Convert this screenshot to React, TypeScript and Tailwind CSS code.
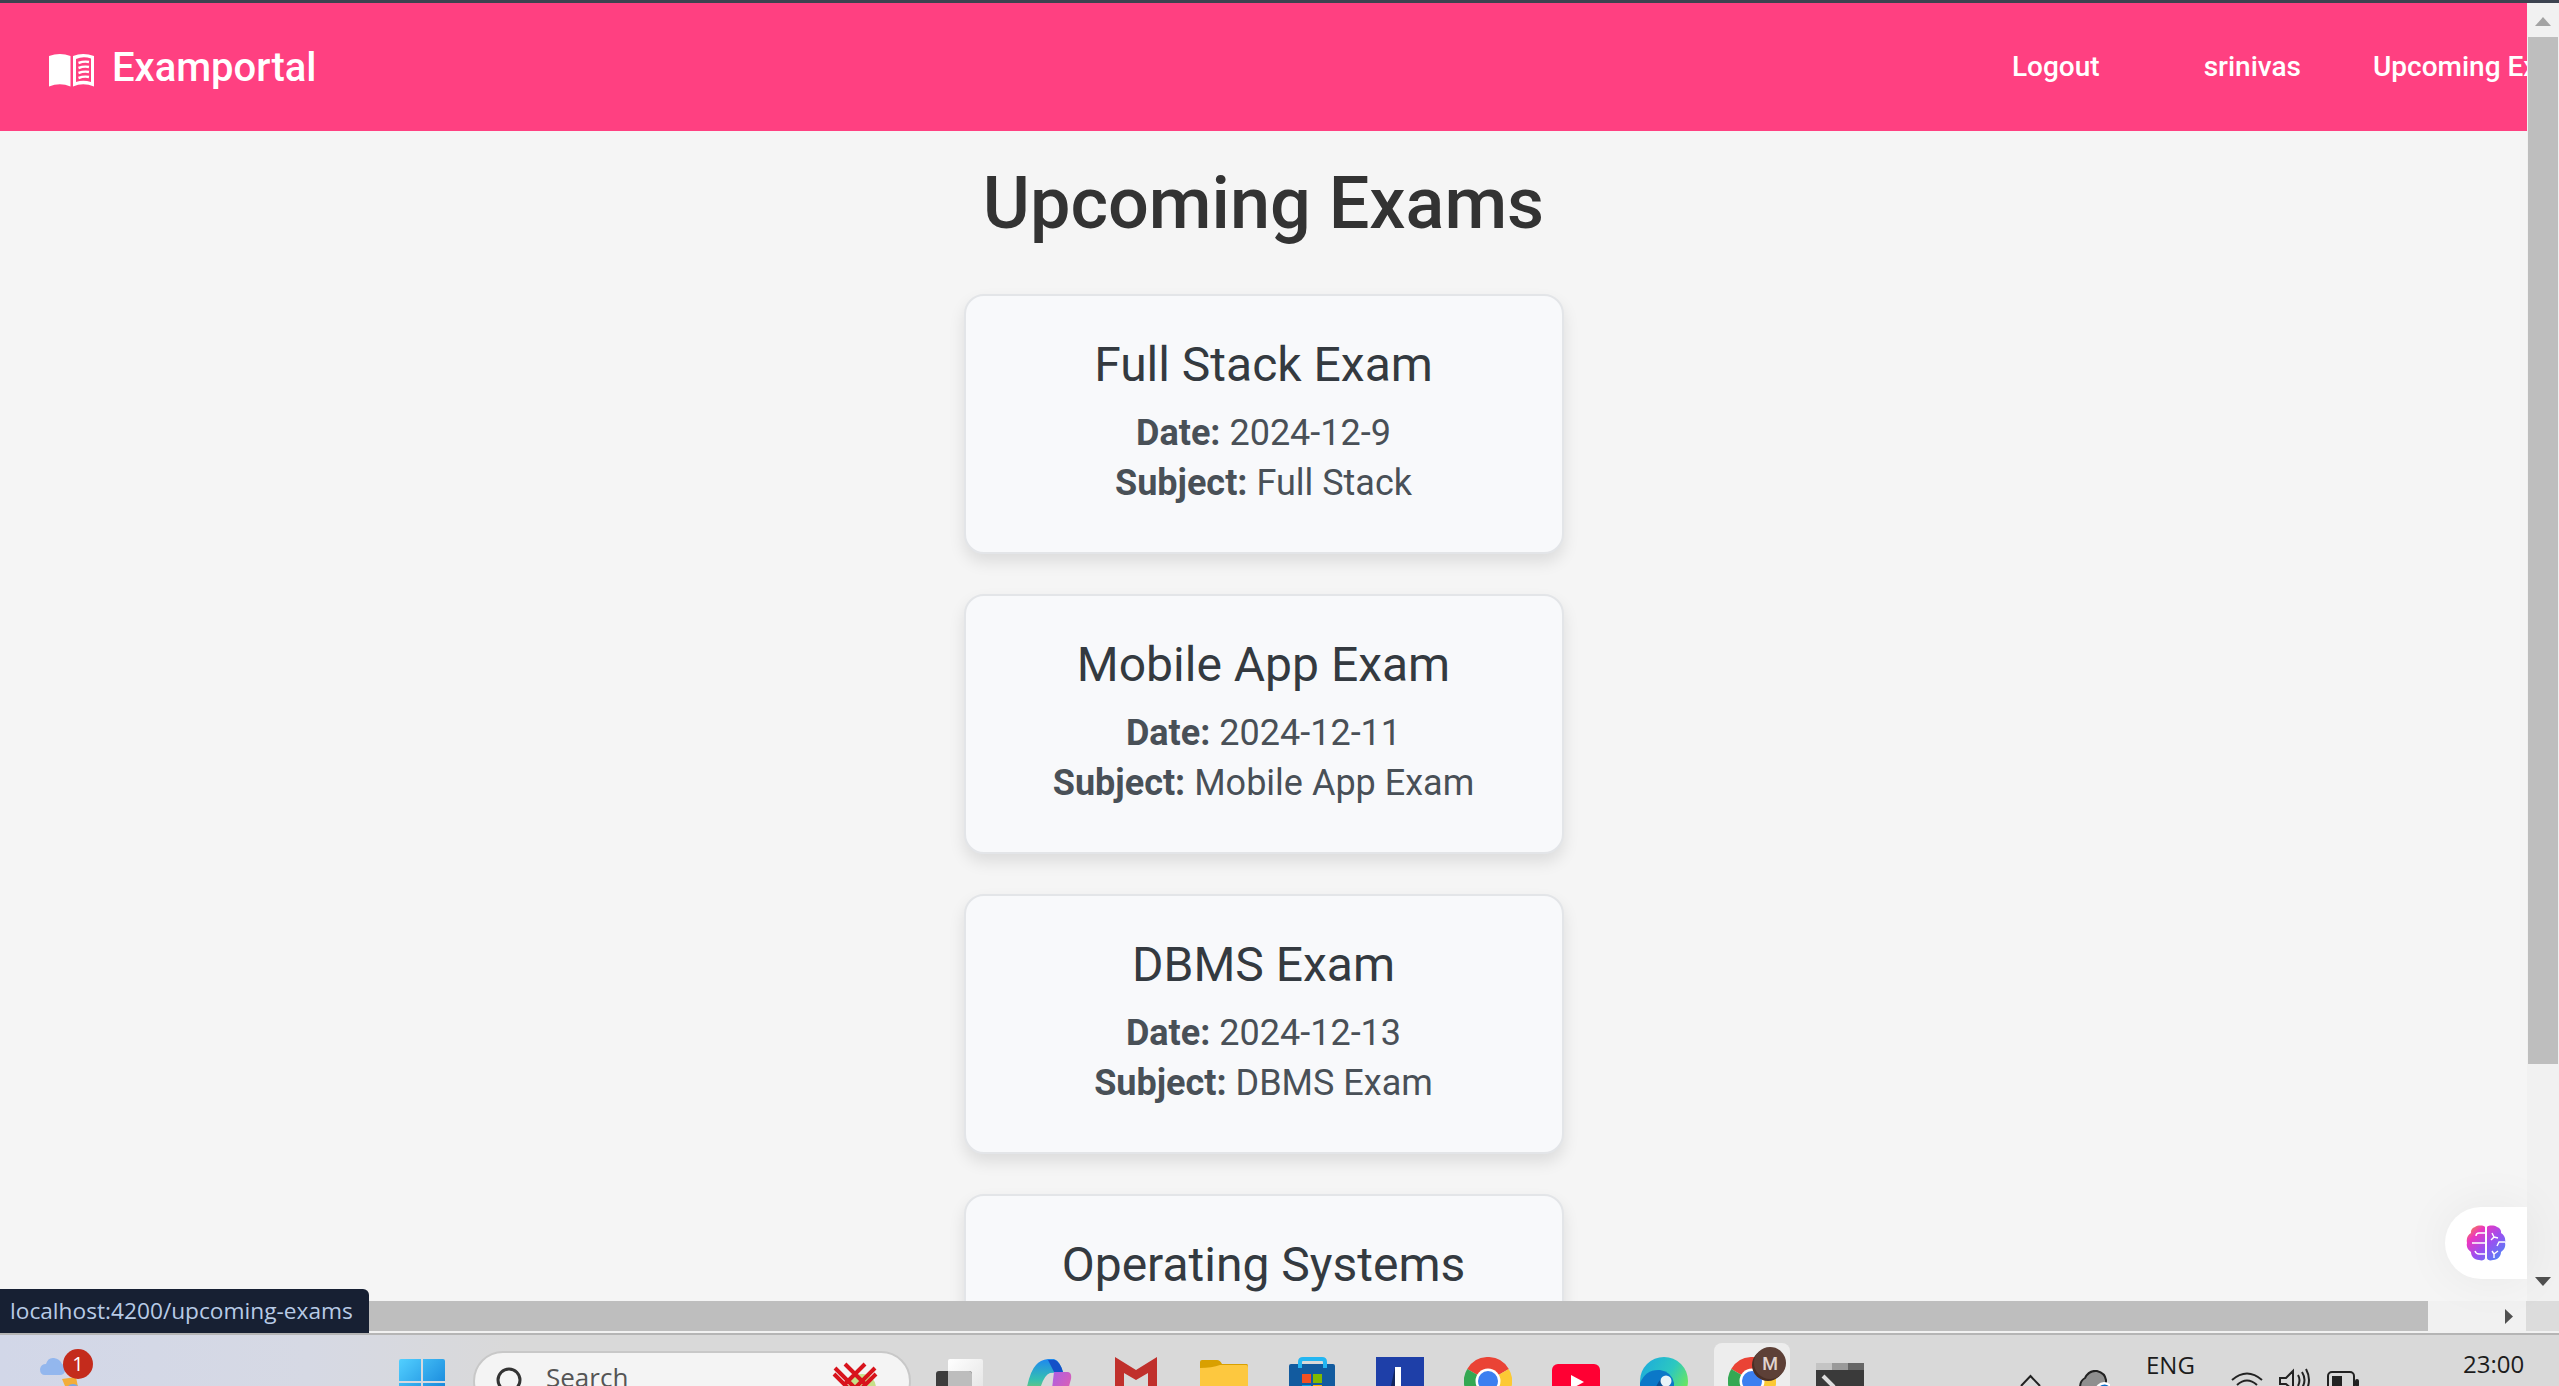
const exams = [
  { title: "Full Stack Exam", date: "2024-12-9", subject: "Full Stack" },
  { title: "Mobile App Exam", date: "2024-12-11", subject: "Mobile App Exam" },
  { title: "DBMS Exam", date: "2024-12-13", subject: "DBMS Exam" },
  { title: "Operating Systems", date: "2024-12-16", subject: "Operating Systems" },
];

function BookIcon() {
  return (
    <svg width="45" height="34" viewBox="0 0 45 34" className="shrink-0 mt-[6px]">
      <path d="M0 3 Q11 -1 21.5 3 V33.5 Q11 29 0 33.5 Z" fill="#fff" />
      <path d="M24 3 Q34 -1 45 3 V33.5 Q34 29 24 33.5 Z" fill="#fff" />
      <path d="M27 6 Q34 3 42 5.5 V29 Q34 26.5 27 29 Z" fill="#ff4081" />
      <path d="M29.5 10 Q35 8 40 9 M29.5 15 Q35 13 40 14 M29.5 20 Q35 18 40 19 M29.5 25 Q35 23 40 24" stroke="#fff" strokeWidth="2.4" fill="none" />
    </svg>
  );
}

function BrainIcon() {
  return (
    <svg width="40" height="36" viewBox="0 0 40 36">
      <defs>
        <linearGradient id="brainFill" x1="0" y1="0" x2="1" y2="1">
          <stop offset="0" stopColor="#f79a2a" />
          <stop offset="0.25" stopColor="#ec36c0" />
          <stop offset="0.55" stopColor="#9c4ff0" />
          <stop offset="1" stopColor="#3f8ff8" />
        </linearGradient>
      </defs>
      <path
        d="M19 2 C19 0.5 12 -0.5 9 2 C6 3 4.5 5.5 5 8 C2 10 0 13 1 18 C0 22 2 25 5 27 C5 31 8 35 13 35 C16 36 19 35 19 33 Z M21 2 C21 0.5 28 -0.5 31 2 C34 3 35.5 5.5 35 8 C38 10 40 13 39 18 C40 22 38 25 35 27 C35 31 32 35 27 35 C24 36 21 35 21 33 Z"
        fill="url(#brainFill)"
      />
      <path
        d="M19 18 H6 M19 8 H13 Q10 8 10 11 M19 29 H13 Q10 29 9 26 M26 8 L28 12 L25 15 M28 12 L32 13 M39 17 H33 L31 21 M26 26 L28 29 M28 29 L32 26 M28 29 L28 33"
        stroke="#fff"
        strokeWidth="1.4"
        fill="none"
      />
    </svg>
  );
}

function ChromeIcon() {
  return (
    <svg width="48" height="48" viewBox="0 0 48 48" className="shrink-0">
      <path d="M24 24 L3.2 12 A24 24 0 0 1 44.8 12 Z" fill="#ea4335" />
      <path d="M24 24 L44.8 12 A24 24 0 0 1 24 48 Z" fill="#fcc934" />
      <path d="M24 24 L24 48 A24 24 0 0 1 3.2 12 Z" fill="#34a853" />
      <circle cx="24" cy="24" r="12.5" fill="#fff" />
      <circle cx="24" cy="24" r="10" fill="#3b7ff0" />
    </svg>
  );
}

function Taskbar() {
  return (
    <div className="h-[51px] shrink-0 flex items-start overflow-hidden bg-[linear-gradient(90deg,#d2d7e8_0%,#d6d9e4_12%,#d9d9d9_20%)]">
      {/* onedrive + badge */}
      <div className="relative shrink-0 ml-[40px] mt-[14px] w-[53px] h-[60px]">
        <svg width="46" height="44" viewBox="0 0 46 44" className="mt-[8px]">
          <path d="M5 18 Q0 18 0 12 Q1 7 6 7 Q8 0 14 1 Q20 2 22 7 Q26 9 25 14 Q24 18 20 18 Z" fill="#93b7ee" />
          <path d="M22 22 L36 20 L38 30 L28 36 Z" fill="#f3ad3a" />
          <circle cx="33" cy="34" r="7" fill="#7da7e6" />
        </svg>
        <div className="absolute right-0 top-0 w-[30px] h-[30px] rounded-full bg-[#c42b1c] text-white text-[20px] font-['Open_Sans',sans-serif] flex items-center justify-center">1</div>
      </div>

      {/* start */}
      <svg width="46" height="46" viewBox="0 0 46 46" className="shrink-0 ml-[306px] mt-[24px]">
        <defs>
          <linearGradient id="winFill" x1="0" y1="0" x2="1" y2="1">
            <stop offset="0" stopColor="#52d0ff" />
            <stop offset="1" stopColor="#0b78d4" />
          </linearGradient>
        </defs>
        <path d="M2 0 H22 V22 H0 V2 Q0 0 2 0 Z M24 0 H44 Q46 0 46 2 V22 H24 Z M0 24 H22 V46 H0 Z M24 24 H46 V46 H24 Z" fill="url(#winFill)" />
      </svg>

      {/* search */}
      <div className="relative shrink-0 ml-[28px] mt-[16px] w-[438px] h-[60px] rounded-[30px] bg-[#f4f4f4] border-2 border-[#c8c8c8] flex items-start">
        <svg width="26" height="30" viewBox="0 0 26 30" className="shrink-0 ml-[21px] mt-[14px]">
          <circle cx="13" cy="13" r="11" stroke="#333" strokeWidth="3" fill="none" />
        </svg>
        <span className="ml-[24px] mt-[6px] text-[26px] leading-[36px] text-[#555] font-['Open_Sans',sans-serif]">Search</span>
        <svg width="46" height="46" viewBox="0 0 46 46" className="absolute left-[357px] top-[9px]">
          <circle cx="30" cy="26" r="14" fill="#c6e08a" />
          <path d="M3 6 L23 26 L43 6 M13 2 L33 22 M33 2 L13 22 M2 12 L16 26 M44 12 L30 26" stroke="#d8131c" strokeWidth="4" fill="none" />
        </svg>
      </div>

      {/* task view */}
      <svg width="47" height="46" viewBox="0 0 47 46" className="shrink-0 ml-[25px] mt-[24px]">
        <defs>
          <linearGradient id="tvWhite" x1="0" y1="0" x2="1" y2="1">
            <stop offset="0" stopColor="#ffffff" />
            <stop offset="1" stopColor="#e2e2e2" />
          </linearGradient>
        </defs>
        <rect x="12" y="0" width="35" height="40" rx="2" fill="url(#tvWhite)" />
        <rect x="0" y="12" width="36" height="34" rx="3" fill="#3d3d3d" />
        <path d="M12 12 H33 Q36 12 36 15 V46 H12 Z" fill="#bdbdbd" />
      </svg>

      {/* copilot */}
      <svg width="48" height="46" viewBox="0 0 48 46" className="shrink-0 ml-[41px] mt-[24px]">
        <defs>
          <linearGradient id="copA" x1="0" y1="0" x2="0" y2="1">
            <stop offset="0" stopColor="#1e88f0" />
            <stop offset="0.45" stopColor="#35c0b0" />
            <stop offset="1" stopColor="#d6cc20" />
          </linearGradient>
          <linearGradient id="copB" x1="0" y1="0" x2="1" y2="1">
            <stop offset="0" stopColor="#a85ee8" />
            <stop offset="1" stopColor="#f060a0" />
          </linearGradient>
        </defs>
        <path d="M0 46 Q4 14 12 6 Q16 1 24 0 H30 Q36 2 39 13 L26 14 Q20 16 16 30 L12 46 Z" fill="url(#copA)" />
        <path d="M24 1 H31 Q36 3 39 13 H30 Z" fill="#1450c8" />
        <path d="M30 13 H44 Q48 14 47 20 L40 46 H26 Z" fill="url(#copB)" />
      </svg>

      {/* mail */}
      <svg width="42" height="48" viewBox="0 0 42 48" className="shrink-0 ml-[43px] mt-[22px]">
        <path d="M0 0 L21 13 L42 0 V48 H33 V16 L21 23 L9 16 V48 H0 Z" fill="#c0302c" />
      </svg>

      {/* folder */}
      <svg width="48" height="46" viewBox="0 0 48 46" className="shrink-0 ml-[43px] mt-[25px]">
        <path d="M2 0 H17 Q20 0 22 4 H47 Q48 4 48 8 H0 V2 Q0 0 2 0 Z" fill="#d9a000" />
        <path d="M0 8 Q12 8 20 5 H46 Q48 5 48 8 V46 H0 Z" fill="#fdc83f" />
      </svg>

      {/* store */}
      <svg width="46" height="46" viewBox="0 0 46 46" className="shrink-0 ml-[41px] mt-[22px]">
        <path d="M11 11 V5 Q11 2 14 2 H33 Q36 2 36 5 V11" stroke="#23b6f2" strokeWidth="4" fill="none" />
        <rect x="0" y="7" width="46" height="39" rx="2" fill="#125b9f" />
        <path d="M11 11 V7 M36 11 V7" stroke="#23b6f2" strokeWidth="4" />
        <rect x="13" y="17" width="9" height="9" fill="#f25022" />
        <rect x="24" y="17" width="9" height="9" fill="#7fba00" />
        <rect x="13" y="28" width="9" height="9" fill="#00a4ef" />
        <rect x="24" y="28" width="9" height="9" fill="#ffb900" />
      </svg>

      {/* pinned blue tile */}
      <svg width="48" height="48" viewBox="0 0 48 48" className="shrink-0 ml-[41px] mt-[22px]">
        <rect width="48" height="48" fill="#1e3fa8" />
        <path d="M15 29 L19 10 V29 Z" fill="#12265f" />
        <rect x="19" y="10" width="6" height="38" fill="#fff" />
      </svg>

      <div className="shrink-0 ml-[40px] mt-[22px]">
        <ChromeIcon />
      </div>

      {/* youtube */}
      <svg width="48" height="40" viewBox="0 0 48 40" className="shrink-0 ml-[40px] mt-[29px]">
        <rect width="48" height="34" rx="6" fill="#ff0033" />
        <path d="M19 11 L32 18 L19 25 Z" fill="#fff" />
      </svg>

      {/* edge */}
      <svg width="48" height="48" viewBox="0 0 48 48" className="shrink-0 ml-[40px] mt-[22px]">
        <defs>
          <linearGradient id="edgeFill" x1="0" y1="0" x2="1" y2="0.6">
            <stop offset="0" stopColor="#1ba8e0" />
            <stop offset="0.6" stopColor="#2cc8c0" />
            <stop offset="1" stopColor="#6ee85a" />
          </linearGradient>
        </defs>
        <circle cx="24" cy="24" r="24" fill="url(#edgeFill)" />
        <path d="M0 26 Q6 12 20 13 Q32 15 34 26 L34 48 H0 Z" fill="#0b78c8" />
        <path d="M16 30 Q20 19 28 21 Q32 24 29 31 Q23 34 24 48 H16 Z" fill="#0a4f94" />
        <circle cx="26" cy="24" r="5.5" fill="#e8f4f8" />
      </svg>

      {/* active chrome with profile badge */}
      <div className="relative shrink-0 ml-[26px] mt-[8px] w-[76px] h-[60px] rounded-lg bg-[#ededed] pl-[14px] pt-[14px]">
        <ChromeIcon />
        <div className="absolute left-[38px] top-[6px] w-[32px] h-[32px] rounded-full bg-[#4a2f26]" />
        <div className="absolute left-[40px] top-[4px] w-[32px] h-[32px] rounded-full bg-[#5d4037] text-[#e0d4cf] text-[18px] font-medium flex items-center justify-center">M</div>
      </div>

      {/* terminal */}
      <svg width="48" height="44" viewBox="0 0 48 44" className="shrink-0 ml-[26px] mt-[28px]">
        <rect width="48" height="44" rx="2" fill="#3a3a3a" />
        <rect x="0" y="0" width="16" height="7" fill="#c4c4c4" />
        <rect x="16" y="0" width="16" height="7" fill="#9a9a9a" />
        <rect x="32" y="0" width="16" height="7" fill="#666666" />
        <path d="M7 13 L18 24" stroke="#ddd" strokeWidth="4" />
      </svg>

      {/* tray */}
      <svg width="21" height="14" viewBox="0 0 21 14" className="shrink-0 ml-[156px] mt-[39px]">
        <path d="M1 12 L10.5 2 L20 12" stroke="#222" strokeWidth="2" fill="none" />
      </svg>
      <svg width="31" height="30" viewBox="0 0 31 30" className="shrink-0 ml-[38px] mt-[35px]">
        <path d="M2 22 Q-1 12 6 8 Q10 0 18 1 Q26 3 27 10 L27 24 H4 Z" fill="#8f8f8f" stroke="#222" strokeWidth="2" />
        <circle cx="25" cy="21" r="9" fill="#fff" />
        <path d="M20 22 A5.5 5.5 0 0 1 30 18" stroke="#0a6cc8" strokeWidth="2" fill="none" />
      </svg>
      <span className="shrink-0 ml-[36px] mt-[16px] w-[48px] text-[24px] leading-[28px] text-[#1c1c1c] font-['Open_Sans',sans-serif]">ENG</span>
      <svg width="32" height="30" viewBox="0 0 32 30" className="shrink-0 ml-[37px] mt-[35px]">
        <path d="M1 10 Q16 -3 31 10 M6 15 Q16 6 26 15 M11 20 Q16 15 21 20" stroke="#222" strokeWidth="2" fill="none" />
      </svg>
      <svg width="32" height="30" viewBox="0 0 32 30" className="shrink-0 ml-[16px] mt-[33px]">
        <path d="M1 10 H7 L14 3 V22 L7 16 H1 Z M19 7 Q22 12 19 18 M23 4 Q28 12 23 20 M27 1 Q33 12 27 23" stroke="#222" strokeWidth="2" fill="none" />
      </svg>
      <svg width="32" height="24" viewBox="0 0 32 24" className="shrink-0 ml-[16px] mt-[36px]">
        <rect x="1" y="1" width="26" height="22" rx="4" stroke="#222" strokeWidth="2" fill="none" />
        <rect x="5" y="5" width="10" height="15" fill="#222" />
        <rect x="28" y="8" width="4" height="8" rx="2" fill="#222" />
      </svg>
      <span className="shrink-0 ml-[104px] mt-[15px] w-[60px] text-[24px] leading-[28px] text-[#1c1c1c] font-['Open_Sans',sans-serif]">23:00</span>
    </div>
  );
}

export default function App() {
  return (
    <div className="h-screen w-full overflow-hidden bg-[#d9d9d9] flex flex-col font-['Roboto',sans-serif] relative">
      <div className="h-[3px] shrink-0 bg-[#3c4350]" />
      <div className="h-[1298px] shrink-0 flex overflow-hidden">
        <div className="flex-1 min-w-0 bg-[#f5f5f5] overflow-hidden">
          <header className="h-[128px] bg-[#ff4081] flex items-center text-white">
            <div className="flex items-center pl-[49px]">
              <BookIcon />
              <span className="ml-[18px] mt-[1px] text-[40px] font-medium">Examportal</span>
            </div>
            <nav className="ml-auto flex items-center text-[28px] font-medium whitespace-nowrap">
              <span>Logout</span>
              <span className="ml-[104px]">srinivas</span>
              <span className="ml-[72px] w-[154px] overflow-hidden">Upcoming Exams</span>
            </nav>
          </header>
          <h1 className="text-center text-[72px] font-medium text-[#333333] mt-[19px]">Upcoming Exams</h1>
          <div className="mt-[36px] flex flex-col items-center gap-[40px]">
            {exams.map((e) => (
              <div key={e.title} className="w-[600px] h-[260px] shrink-0 rounded-[20px] border-2 border-[#e3e5e8] bg-[#f8f9fb] shadow-[0_8px_16px_rgba(0,0,0,0.1)] pt-[41px] text-center">
                <h2 className="text-[48px] text-[#343a40] leading-[56px]">{e.title}</h2>
                <p className="text-[36px] text-[#495057] mt-[15px] leading-[50px]"><b>Date:</b> {e.date}</p>
                <p className="text-[36px] text-[#495057] leading-[50px]"><b>Subject:</b> {e.subject}</p>
              </div>
            ))}
          </div>
        </div>
        <div className="w-[32px] shrink-0 bg-[#f1f1f1] flex flex-col items-center">
          <svg width="16" height="9" viewBox="0 0 16 9" className="mt-[14px] shrink-0">
            <path d="M8 0 L16 9 H0 Z" fill="#a3a3a3" />
          </svg>
          <div className="w-[30px] h-[1027px] mt-[11px] shrink-0 bg-[#bebebe]" />
          <svg width="16" height="9" viewBox="0 0 16 9" className="mt-[213px] shrink-0">
            <path d="M0 0 H16 L8 9 Z" fill="#505050" />
          </svg>
        </div>
      </div>
      <div className="h-[30px] shrink-0 flex">
        <div className="w-[2428px] bg-[#bebebe]" />
        <div className="w-[98px] bg-[#f1f1f1] flex items-center justify-end pr-[13px]">
          <svg width="8" height="15" viewBox="0 0 8 15">
            <path d="M0 0 L8 7.5 L0 15 Z" fill="#505050" />
          </svg>
        </div>
        <div className="flex-1 bg-[#dcdcdc]" />
      </div>
      <div className="h-[2px] shrink-0 bg-[#f1f1f1]" />
      <div className="h-[2px] shrink-0 bg-[#b5b5b5]" />
      <Taskbar />

      {/* link preview bubble */}
      <div className="absolute left-0 top-[1289px] w-[369px] h-[44px] rounded-tr-[6px] bg-[#172033] text-[#b8cbe6] text-[22.7px] leading-[44px] pl-[10px] font-['Open_Sans',sans-serif] whitespace-nowrap">
        localhost:4200/upcoming-exams
      </div>

      {/* floating assistant button */}
      <div className="absolute left-[2445px] top-[1207px] w-[82px] h-[72px] rounded-l-[36px] bg-white shadow-[0_0_50px_rgba(0,0,0,0.06)] pl-[21px] pt-[18px]">
        <BrainIcon />
      </div>
    </div>
  );
}
